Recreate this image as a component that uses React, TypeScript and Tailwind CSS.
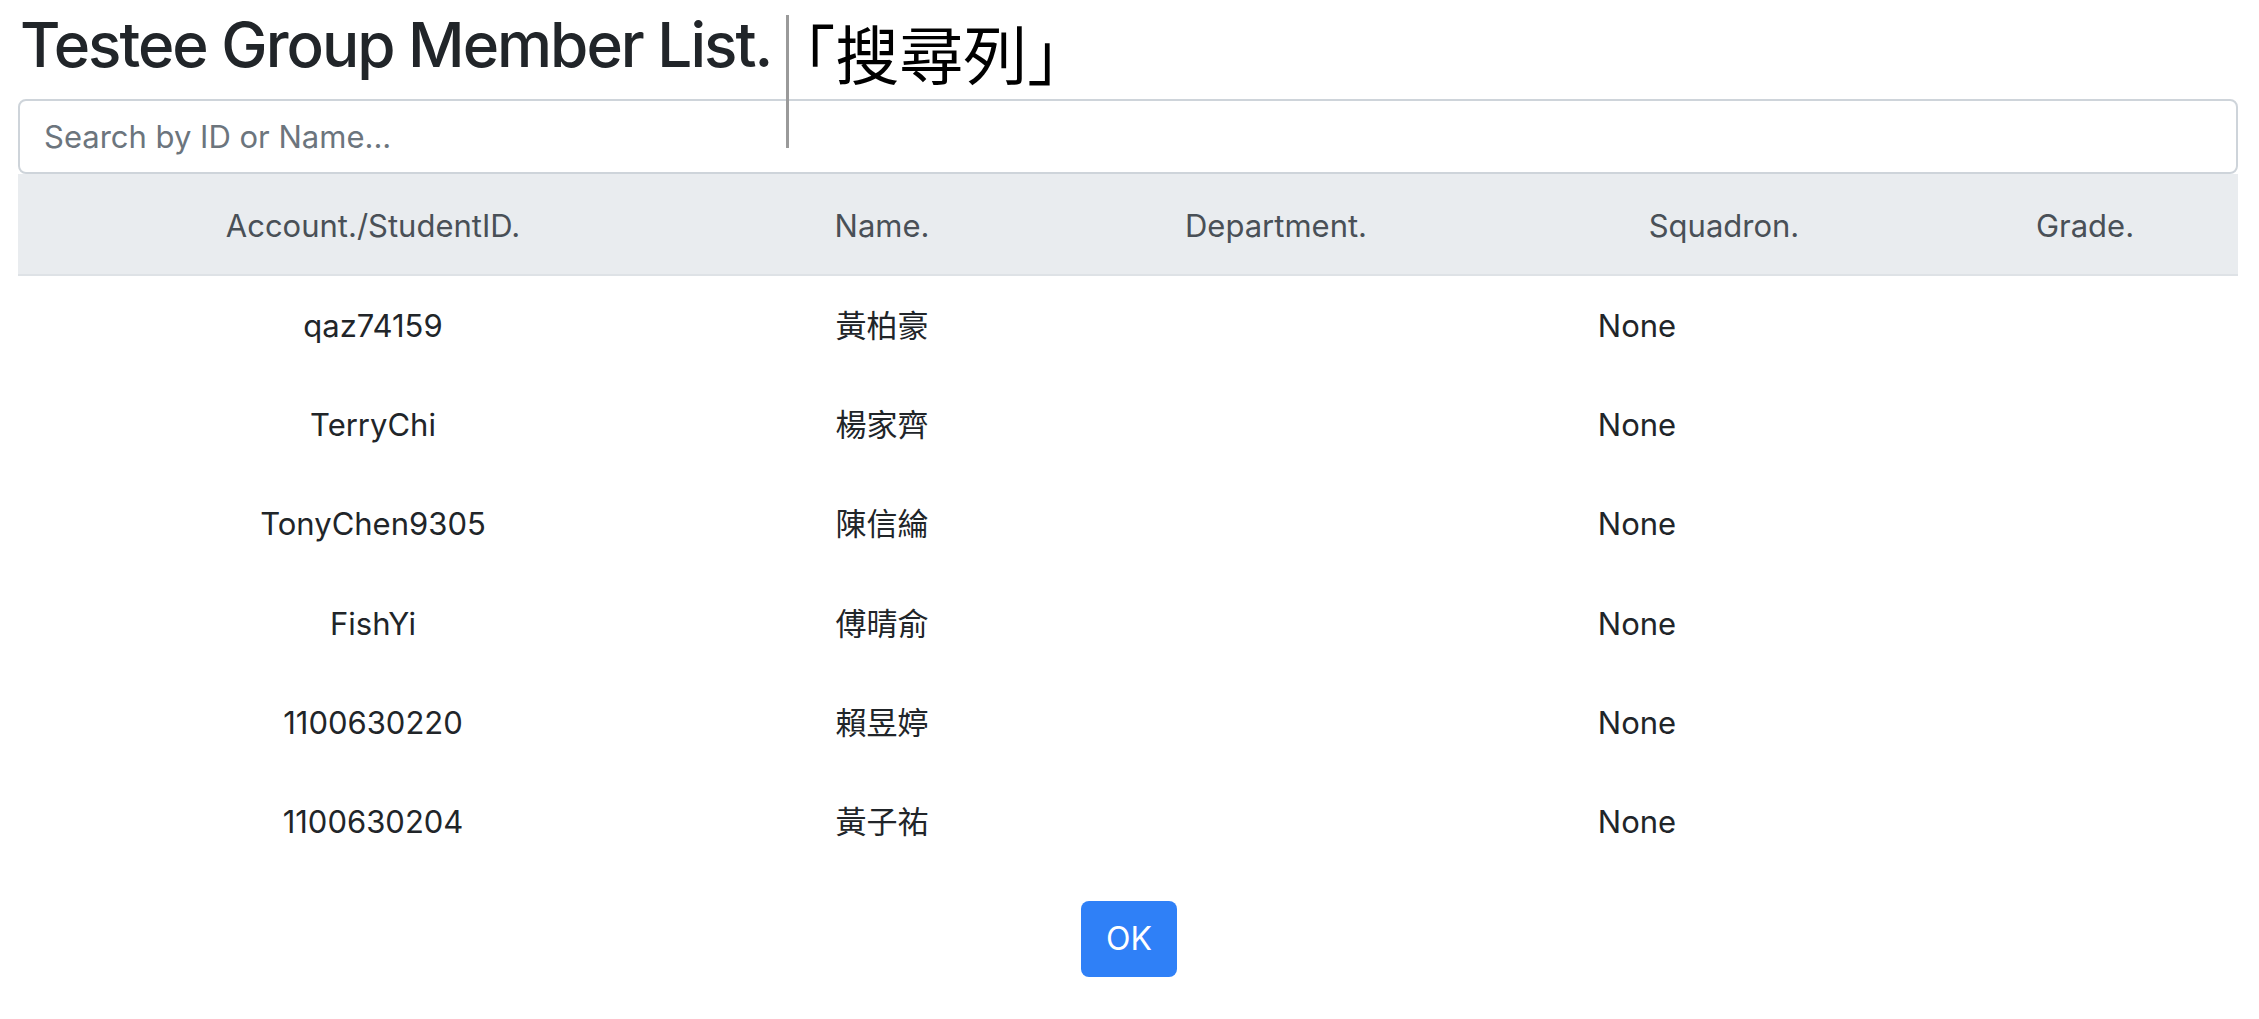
import React, { useState } from 'react';

interface Member {
  id: string;
  name: string;
  department: string;
  squadron: string;
  grade: string;
}

const members: Member[] = [
  { id: 'qaz74159', name: '黃柏豪', department: '', squadron: 'None', grade: '' },
  { id: 'TerryChi', name: '楊家齊', department: '', squadron: 'None', grade: '' },
  { id: 'TonyChen9305', name: '陳信綸', department: '', squadron: 'None', grade: '' },
  { id: 'FishYi', name: '傅晴俞', department: '', squadron: 'None', grade: '' },
  { id: '1100630220', name: '賴昱婷', department: '', squadron: 'None', grade: '' },
  { id: '1100630204', name: '黃子祐', department: '', squadron: 'None', grade: '' },
];

const App: React.FC = () => {
  const [query, setQuery] = useState('');

  const filtered = members.filter(
    (m) => !query.trim() || m.id.includes(query) || m.name.includes(query)
  );

  return (
    <div className="relative w-[2259px] min-h-[1019px] bg-white text-[#212529] font-['Inter','Noto_Sans_CJK_TC',sans-serif]">
      <div className="pl-[18px] pr-[21px]">
        {/* Title */}
        <div className="h-[99px] pt-[8px]">
          <h2 className="text-[62px] font-medium leading-[1.2] tracking-[-2px] pl-[2px] whitespace-nowrap">
            Testee Group Member List.
            <span className="font-normal tracking-normal text-black text-[64px] font-['Noto_Sans_CJK_TC',sans-serif] align-[-12px]">「搜尋列」</span>
          </h2>
        </div>

        {/* Search */}
        <input
          type="text"
          value={query}
          onChange={(e) => setQuery(e.target.value)}
          placeholder="Search by ID or Name..."
          className="block w-full h-[75px] border-2 border-[#ced4da] rounded-[8px] px-[24px] text-[31px] outline-none placeholder:text-[#6c757d]"
        />

        {/* Table */}
        <table className="w-full table-fixed border-collapse text-[31px]">
          <colgroup>
            <col className="w-[710px]" />
            <col className="w-[308px]" />
            <col className="w-[480px]" />
            <col className="w-[416px]" />
            <col className="w-[306px]" />
          </colgroup>
          <thead className="bg-[#e9ecef] text-[#495057]">
            <tr className="h-[101px] border-b-2 border-[#dee2e6]">
              <th className="font-normal text-center pt-[4px]">Account./StudentID.</th>
              <th className="font-normal text-center pt-[4px]">Name.</th>
              <th className="font-normal text-center pt-[4px]">Department.</th>
              <th className="font-normal text-center pt-[4px]">Squadron.</th>
              <th className="font-normal text-center pt-[4px]">Grade.</th>
            </tr>
          </thead>
          <tbody>
            {filtered.map((m) => (
              <tr key={m.id} className="h-[99.3px]">
                <td className="text-center pt-[3px]">{m.id}</td>
                <td className="text-center pt-[3px]">{m.name}</td>
                <td className="text-center pt-[3px]">{m.department}</td>
                <td className="text-center pt-[3px] pr-[174px]">{m.squadron}</td>
                <td className="text-center pt-[3px]">{m.grade}</td>
              </tr>
            ))}
          </tbody>
        </table>

        {/* OK */}
        <div className="flex justify-center pt-[30px] pl-[2px]">
          <button className="w-[96px] h-[76px] bg-[#2f80f7] text-white rounded-[8px] text-[32px]">OK</button>
        </div>
      </div>

      {/* vertical caret line over the header */}
      <div className="absolute left-[786px] top-[15px] w-[3px] h-[133px] bg-[#9a9a9a]" />
    </div>
  );
};

export default App;
